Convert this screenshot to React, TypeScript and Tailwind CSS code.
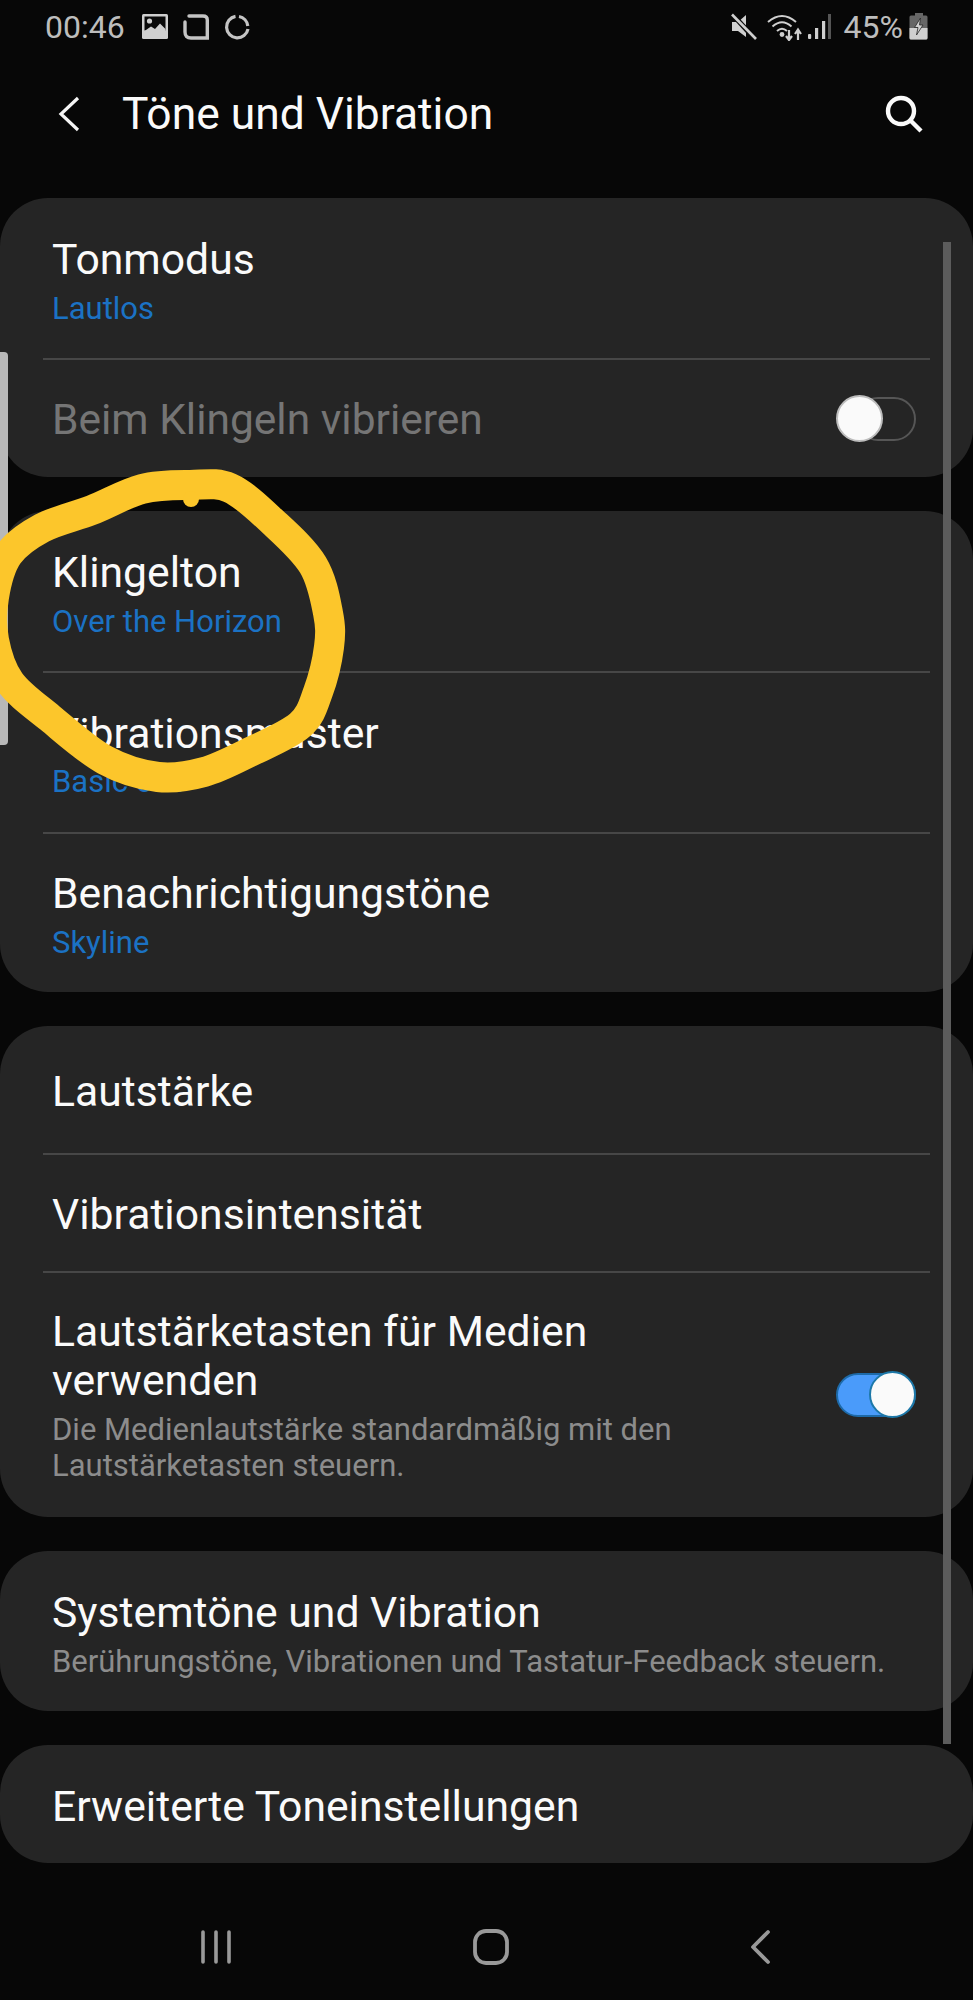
import React from "react";

const Divider = () => <div className="mx-[43px] h-[2px] bg-[#474747]" />;

function TwoLine({ title, sub, box, gap }: { title: string; sub: string; box: string; gap: string }) {
  return (
    <div className={`${box} pl-[52px]`}>
      <div className="text-[42.7px] leading-[50px] text-[#fafafa]">{title}</div>
      <div className={`${gap} text-[31px] leading-[36px] text-[#1b72c4]`}>{sub}</div>
    </div>
  );
}

function Single({ title, box }: { title: string; box: string }) {
  return (
    <div className={`${box} pl-[52px] flex items-center text-[42.7px] text-[#fafafa]`}>{title}</div>
  );
}

const Card = ({ children }: { children: React.ReactNode }) => (
  <div className="bg-[#252525] rounded-[48px] overflow-hidden">{children}</div>
);

function StatusLeft() {
  return (
    <div className="flex items-center">
      <span className="text-[32px] leading-[38px] text-[#bdbdbd] w-[97px]">00:46</span>
      <svg width="26" height="26" viewBox="0 0 26 26" className="mr-[15px]">
        <rect x="0" y="0" width="26" height="25" rx="1.5" fill="#cfcfcf" />
        <rect x="2.5" y="2.5" width="21" height="14" fill="#0a0a0a" />
        <circle cx="7.5" cy="7" r="2.6" fill="#cfcfcf" />
        <path d="M2.5 17 L9 12.5 L13 15 L18 9.5 L23.5 15 V23 H2.5 Z" fill="#cfcfcf" />
      </svg>
      <svg width="26" height="26" viewBox="0 0 26 26" className="mr-[15px]" fill="none" stroke="#c4c4c4" strokeWidth="3.4">
        <path d="M6 2 H20 Q24.3 2 24.3 6 V24 H8 Q2 24 2 18 V8" strokeLinecap="round" />
      </svg>
      <svg width="26" height="26" viewBox="0 0 26 26" fill="none" stroke="#c4c4c4" strokeWidth="3.2">
        <path d="M15 2.5 A10.8 10.8 0 0 1 23.8 12" />
        <path d="M24 15 A10.8 10.8 0 1 1 11.5 2.4" />
      </svg>
    </div>
  );
}

function StatusRight() {
  return (
    <div className="flex items-center">
      <svg width="26" height="28" viewBox="0 0 26 28" className="mr-[10px]">
        <path d="M1 9 H7 L15 2 V24 L7 18 H1 Z" fill="#cfcfcf" />
        <path d="M2 2 L24 26" stroke="#0a0a0a" strokeWidth="5" />
        <path d="M1 1.5 L25 26" stroke="#cfcfcf" strokeWidth="2.6" />
      </svg>
      <svg width="36" height="28" viewBox="0 0 36 28" className="mr-[4px]" fill="none" stroke="#cfcfcf" strokeWidth="2">
        <path d="M1 9 Q15 -3 29 9" />
        <path d="M5.5 13.5 Q15 5 24.5 13.5" />
        <path d="M10 18 Q15 13.5 20 18" />
        <circle cx="15" cy="21.5" r="2.4" fill="#cfcfcf" stroke="none" />
        <path d="M22 17 V26 M19 23 L22 27 L25 23" strokeWidth="2.2" />
        <path d="M31 27 V17 M28 21 L31 16.5 L34 21" strokeWidth="2.2" />
      </svg>
      <svg width="24" height="28" viewBox="0 0 24 28" className="mr-[13px]">
        <rect x="1" y="21" width="3.2" height="5" rx="1" fill="#cfcfcf" />
        <rect x="8" y="15" width="3.2" height="11" fill="#cfcfcf" />
        <rect x="15" y="8" width="3.2" height="18" fill="#cfcfcf" />
        <rect x="21" y="1" width="3" height="25" fill="#555555" />
      </svg>
      <span className="text-[32px] leading-[38px] text-[#bdbdbd] mr-[6px]">45%</span>
      <svg width="20" height="27" viewBox="0 0 20 27">
        <rect x="6" y="0" width="8" height="3" fill="#666666" />
        <rect x="0.5" y="2.5" width="18" height="24" rx="1.5" fill="#666666" />
        <path d="M0.5 15 H18.5 V25 Q18.5 26.5 17 26.5 H2 Q0.5 26.5 0.5 25 Z" fill="#cfcfcf" />
        <path d="M11.5 5 L5.5 14.5 H9 L7.5 22 L14 12 H10.5 Z" fill="#cfcfcf" stroke="#262626" strokeWidth="0.8" />
      </svg>
    </div>
  );
}

const scribblePoints: [number, number][] = [
  [190, 485], [230, 488], [273, 522], [313, 565], [328, 613], [329, 647], [318, 692], [300, 725],
  [250, 752], [204, 772], [158, 777], [105, 760], [50, 718], [10, 682], [-6, 640], [-6, 597],
  [8, 555], [42, 528], [92, 510], [142, 489],
];

function smoothClosed(p: [number, number][]) {
  const n = p.length;
  let d = `M${p[0][0]} ${p[0][1]}`;
  for (let i = 0; i < n; i++) {
    const a = p[(i - 1 + n) % n], b = p[i], c = p[(i + 1) % n], e = p[(i + 2) % n];
    d += ` C${b[0] + (c[0] - a[0]) / 6} ${b[1] + (c[1] - a[1]) / 6} ${c[0] - (e[0] - b[0]) / 6} ${c[1] - (e[1] - b[1]) / 6} ${c[0]} ${c[1]}`;
  }
  return d + " Z";
}

function Scribble() {
  return (
    <svg className="absolute left-0 top-0 pointer-events-none" width="973" height="820" viewBox="0 0 973 820">
      <path d={smoothClosed(scribblePoints)} fill="none" stroke="#fcc62b" strokeWidth="30" strokeLinejoin="round" />
      <circle cx="191" cy="499" r="8" fill="#fcc62b" />
    </svg>
  );
}

export default function App() {
  return (
    <div className="relative w-[973px] h-[2000px] overflow-hidden bg-[#070707] font-['Roboto',sans-serif]">
      {/* status bar */}
      <div className="h-[52px] flex items-center justify-between pl-[45px] pr-[44px] pt-[1px]">
        <StatusLeft />
        <StatusRight />
      </div>

      {/* header */}
      <div className="h-[146px] pb-[22px] flex items-center pl-[58px] pr-[50px]">
        <svg width="22" height="36" viewBox="0 0 22 36" fill="none" stroke="#f5f5f5" strokeWidth="3.2" className="mr-[42px]">
          <path d="M20 2 L3 18 L20 34" />
        </svg>
        <span className="text-[44.4px] leading-[50px] text-[#fafafa] flex-1">Töne und Vibration</span>
        <svg width="38" height="38" viewBox="0 0 38 38" fill="none" stroke="#fafafa" strokeWidth="4.4">
          <circle cx="16" cy="16" r="13" />
          <path d="M25.5 25.5 L36 36" />
        </svg>
      </div>

      {/* list */}
      <div className="flex flex-col gap-[34px]">
        <Card>
          <TwoLine title="Tonmodus" sub="Lautlos" box="h-[160px] pt-[36px]" gap="mt-[7px]" />
          <Divider />
          <div className="h-[117px] pl-[52px] pr-[57px] flex items-center justify-between">
            <span className="text-[42.5px] pt-[3px] text-[#757575]">Beim Klingeln vibrieren</span>
            <div className="relative w-[80px] h-[44px]">
              <div className="absolute right-0 top-0 w-[60px] h-[44px] rounded-full border-2 border-[#565656]" />
              <div className="absolute left-0 top-[-2px] w-[47px] h-[47px] rounded-full bg-[#fafafa] border-2 border-[#bdbdbd]" />
            </div>
          </div>
        </Card>

        <Card>
          <TwoLine title="Klingelton" sub="Over the Horizon" box="h-[160px] pt-[36px]" gap="mt-[7px]" />
          <Divider />
          <TwoLine title="Vibrationsmuster" sub="Basic call" box="h-[159px] pt-[35px]" gap="mt-[6px]" />
          <Divider />
          <TwoLine title="Benachrichtigungstöne" sub="Skyline" box="h-[158px] pt-[34px]" gap="mt-[7px]" />
        </Card>

        <Card>
          <Single title="Lautstärke" box="h-[127px] pt-[3px]" />
          <Divider />
          <Single title="Vibrationsintensität" box="h-[116px] pt-[3px]" />
          <Divider />
          <div className="h-[244px] pl-[52px] pr-[57px] pt-[34px] flex items-start">
            <div className="flex-1">
              <div className="text-[42.7px] leading-[49px] text-[#fafafa]">Lautstärketasten für Medien<br />verwenden</div>
              <div className="text-[31px] leading-[36px] mt-[7px] text-[#8c8c8c]">
                Die Medienlautstärke standardmäßig mit den<br />Lautstärketasten steuern.
              </div>
            </div>
            <div className="relative w-[80px] h-[44px] mt-[66px]">
              <div className="absolute inset-0 rounded-full bg-[#4a9bfa] border-2 border-[#1d6aa8]" />
              <div className="absolute right-0 top-[-2px] w-[47px] h-[47px] rounded-full bg-[#fafafa] border-2 border-[#1d78a8]" />
            </div>
          </div>
        </Card>

        <Card>
          <div className="h-[160px] pl-[52px] pt-[36px]">
            <div className="text-[42.7px] leading-[50px] text-[#fafafa]">Systemtöne und Vibration</div>
            <div className="text-[31px] leading-[36px] mt-[7px] text-[#8c8c8c]">Berührungstöne, Vibrationen und Tastatur-Feedback steuern.</div>
          </div>
        </Card>

        <Card>
          <Single title="Erweiterte Toneinstellungen" box="h-[118px] pt-[5px]" />
        </Card>
      </div>

      {/* nav bar */}
      <div className="absolute bottom-0 left-0 right-0 h-[120px] flex items-start justify-between pl-[200px] pr-[202px] pt-[49px]">
        <svg width="32" height="36" viewBox="0 0 32 36" stroke="#999999" strokeWidth="3.6" strokeLinecap="round">
          <path d="M3 3 V33 M16 3 V33 M29 3 V33" />
        </svg>
        <svg width="36" height="36" viewBox="0 0 36 36" fill="none" stroke="#999999" strokeWidth="3.8">
          <rect x="2" y="2" width="32" height="32" rx="11" />
        </svg>
        <svg width="21" height="36" viewBox="0 0 21 36" fill="none" stroke="#999999" strokeWidth="3.8" strokeLinecap="round" strokeLinejoin="round">
          <path d="M18 3 L3 18 L18 33" />
        </svg>
      </div>

      {/* overlays */}
      <div className="absolute left-[943px] top-[242px] w-[8px] h-[1502px] bg-[#5c5c5c]" />
      <div className="absolute left-0 top-[352px] w-[8px] h-[393px] rounded-r-[4px] bg-[#b8b8b8]" />
      <Scribble />
    </div>
  );
}
